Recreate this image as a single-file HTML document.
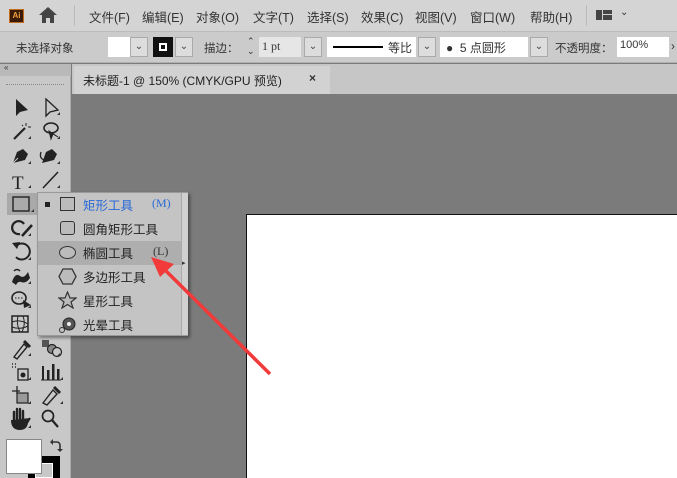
<!DOCTYPE html><html><head><meta charset="utf-8"><style>
*{margin:0;padding:0;box-sizing:border-box}
body{width:677px;height:478px;overflow:hidden;background:#7b7b7b;font-family:"Liberation Sans","Noto Sans CJK SC",sans-serif;font-size:12px;color:#333;position:relative}
.a{position:absolute}
.menu span{position:absolute;top:7px;font-size:12.5px;color:#333}
.box{position:absolute;background:#fff;border:1px solid #aaa;height:20px;top:37px}
.dd{position:absolute;top:37px;width:18px;height:20px;border:1px solid #aaa;background:#ddd;font-size:10px;text-align:center;line-height:18px;color:#444}
.it{position:absolute;left:0;width:143px;height:24px}
.it .t{position:absolute;left:45px;top:2px;font-size:12.5px;color:#222}
.ic{position:absolute;width:20px;height:20px}
</style></head><body>
<div class="a" style="left:0;top:0;width:677px;height:31px;background:#d4d4d4"></div>
<div class="a" style="left:9px;top:9px;width:15px;height:14px;background:#3a1b08;border:1px solid #c46b1a;color:#f0a040;font-size:8px;font-weight:bold;text-align:center;line-height:12px">Ai</div>
<svg class="a" style="left:38px;top:6px" width="20" height="18"><path d="M10 1 L1 9 H4 V17 H8 V12 H12 V17 H16 V9 H19 Z" fill="#444"/></svg>
<div class="a" style="left:74px;top:5px;width:1px;height:21px;background:#bbb"></div>
<div class="menu">
<span style="left:89px">文件(F)</span><span style="left:142px">编辑(E)</span><span style="left:196px">对象(O)</span><span style="left:253px">文字(T)</span><span style="left:307px">选择(S)</span><span style="left:361px">效果(C)</span><span style="left:415px">视图(V)</span><span style="left:470px">窗口(W)</span><span style="left:530px">帮助(H)</span></div>
<div class="a" style="left:586px;top:5px;width:1px;height:21px;background:#bbb"></div>
<div class="a" style="left:596px;top:10px;width:6px;height:10px;background:#444"></div>
<div class="a" style="left:603px;top:10px;width:9px;height:4px;background:#444"></div>
<div class="a" style="left:603px;top:15px;width:9px;height:5px;background:#444"></div>
<div class="a" style="left:620px;top:7px;font-size:10px">⌄</div>
<div class="a" style="left:0;top:31px;width:677px;height:32px;background:#cbcbcb;border-top:1px solid #bbb;border-bottom:1px solid #b0b0b0"></div>
<div class="a" style="left:16px;top:40px;font-size:11.5px">未选择对象</div>
<div class="box" style="left:108px;width:22px;border:none"></div><div class="dd" style="left:130px">⌄</div>
<div class="a" style="left:153px;top:37px;width:20px;height:20px;background:#111"><div class="a" style="left:6px;top:6px;width:8px;height:8px;border:2px solid #fff"></div></div><div class="dd" style="left:175px">⌄</div>
<div class="a" style="left:204px;top:40px;font-size:11.5px">描边：</div>
<div class="a" style="left:247px;top:36px;font-size:9px;line-height:10px">⌃<br>⌄</div>
<div class="box" style="left:259px;width:42px;border:none;background:#e6e6e6;font-family:'Liberation Serif',serif;padding:2px 3px">1 pt</div><div class="dd" style="left:304px">⌄</div>
<div class="box" style="left:327px;width:89px;border:none"><div class="a" style="left:6px;top:9px;width:50px;height:2px;background:#000"></div><span class="a" style="left:61px;top:2px">等比</span></div><div class="dd" style="left:418px">⌄</div>
<div class="box" style="left:440px;width:88px;border:none"><span class="a" style="left:6px;top:2px">●&nbsp; 5 点圆形</span></div><div class="dd" style="left:530px">⌄</div>
<div class="a" style="left:555px;top:40px;font-size:11.5px">不透明度：</div>
<div class="box" style="left:617px;width:52px;border:none;padding:2px 3px;font-size:11px">100%</div>
<div class="a" style="left:671px;top:39px;font-size:12px">›</div>
<div class="a" style="left:0;top:64px;width:71px;height:414px;background:#c8c8c8;border-right:1px solid #aaa"></div>
<div class="a" style="left:0;top:64px;width:71px;height:12px;background:#b9b9b9"></div>
<div class="a" style="left:4px;top:63px;font-size:8px">«</div>
<div class="a" style="left:6px;top:84px;width:58px;height:2px;border-top:1px dotted #888"></div>
<!-- selected rect tool bg -->
<div class="a" style="left:7px;top:193px;width:30px;height:22px;background:#a9a9a9"></div>
<!-- tools: left col center x=21, right col x=50 -->
<svg class="a" style="left:0;top:0" width="71" height="478" fill="#222" stroke="#222">
<!-- row0 y107 -->
<path d="M16 99 L16 116 L20 112 L28 110 Z" stroke="none"/>
<path d="M46 99 L46 116 L50 112 L58 110 Z" fill="none" stroke-width="1.3"/>
<!-- row1 y131 -->
<path d="M14 139 L25 128" stroke-width="2.2"/><path d="M26 123 v3 M28 127 h3 M22 125 l1 1" stroke-width="1"/>
<ellipse cx="51" cy="128" rx="7" ry="5" fill="none" stroke-width="1.6"/><path d="M49 131 L51 139 L53 134 L58 137 Z" stroke-width="1"/>
<!-- row2 y156 -->
<path d="M13 163 L17 152 L23 149 L28 154 L25 160 Z" stroke="none"/><path d="M13 163 L18 158" stroke="#c8c8c8"/>
<path d="M42 163 L46 152 L52 149 L57 154 L54 160 Z" stroke="none"/><path d="M41 152 q-2 6 3 8" fill="none" stroke-width="1.3"/>
<!-- row3 y180 -->
<text x="12" y="189" font-size="19" stroke="none" font-family="Liberation Serif">T</text>
<path d="M43 188 L58 172" stroke-width="1.5"/>
<!-- row4 y204 rect -->
<rect x="13" y="197" width="16" height="14" fill="#aaa" stroke-width="1.4"/>
<!-- row5 y228 shaper -->
<path d="M20 234 a6.5 6.5 0 1 1 4 -10" fill="none" stroke-width="2.2"/><path d="M22 236 L32 225" stroke-width="2.5"/>
<!-- row6 y252 rotate -->
<path d="M16 246 a8 8 0 1 1 0 11" fill="none" stroke-width="2"/><path d="M12 243 L17 249 L20 242 Z" stroke="none"/>
<!-- row7 y276 warp -->
<path d="M12 282 q3 -10 8 -6 q4 3 8 -4 l2 6 q-4 6 -9 4 q-3 -1 -5 3 Z" stroke="none"/><path d="M14 271 q3 -3 6 0" fill="none" stroke-width="1.5"/>
<!-- row8 y300 shape builder -->
<ellipse cx="19" cy="298" rx="7" ry="6" fill="none" stroke-width="1.6"/><path d="M15 298 h8" stroke-dasharray="1.5 1.5"/><path d="M23 300 L31 305 L24 308 Z" stroke="none"/>
<!-- row9 y324 mesh -->
<rect x="12" y="316" width="16" height="16" fill="none" stroke-width="1.5"/><path d="M12 322 q8 -3 16 2 M12 327 q8 3 16 -1 M18 316 q-2 8 2 16 M23 316 q3 8 -1 16" fill="none" stroke-width="1"/>
<!-- row10 y348 eyedropper / blend -->
<path d="M14 357 L24 344 L27 347 L17 359 Z" fill="none" stroke-width="1.4"/><path d="M24 341 L30 347" stroke-width="3"/>
<rect x="42" y="340" width="7" height="7" fill="#555" stroke="none"/><circle cx="52" cy="349" r="4.5" fill="#888" stroke-width="1.2"/><circle cx="57" cy="352" r="4.5" fill="#c8c8c8" stroke-width="1.2"/>
<!-- row11 y372 symbol / graph -->
<rect x="18" y="369" width="10" height="11" fill="none" stroke-width="1.3"/><circle cx="23" cy="375" r="2.5" stroke="none"/><path d="M12 364 h1 M15 364 h1 M12 367 h1 M15 367 h1" stroke-width="1.5"/>
<rect x="42" y="366" width="2" height="14" stroke="none"/><rect x="47" y="370" width="2.5" height="10" stroke="none"/><rect x="52" y="364" width="2.5" height="16" stroke="none"/><rect x="57" y="369" width="2.5" height="11" stroke="none"/><path d="M41 380 h20" stroke-width="1"/>
<!-- row12 y396 artboard / slice -->
<path d="M17 386 v8 M12 391 h8" stroke-width="1.3"/><rect x="17" y="393" width="11" height="10" fill="#999" stroke-width="1.2"/>
<path d="M43 403 L53 390 L57 394 L47 405 Z" fill="none" stroke-width="1.4"/><path d="M54 387 L60 393" stroke-width="3"/>
<!-- row13 y420 hand / zoom -->
<path d="M14 420 L14 412 M17 419 L17 409 M20 419 L20 409 M23 420 L23 411" stroke-width="2.4" stroke-linecap="round"/><path d="M12 420 q0 9 8 9 q6 0 7 -6 l3 -5" fill="#222" stroke-width="2"/>
<circle cx="48" cy="416" r="5.5" fill="none" stroke-width="1.7"/><path d="M52 420 L58 427" stroke-width="2.2"/>
<!-- small corner triangles -->
<g stroke="none" fill="#333">
<path d="M60 115 h-3 l3 -3z M31 139 h-3 l3-3z M60 139 h-3 l3-3z M31 164 h-3 l3-3z M60 164 h-3 l3-3z M31 188 h-3 l3-3z M60 188 h-3 l3-3z M34 212 h-3 l3-3z M31 236 h-3 l3-3z M31 260 h-3 l3-3z M31 284 h-3 l3-3z M31 308 h-3 l3-3z M31 356 h-3 l3-3z M60 356 h-3 l3-3z M31 380 h-3 l3-3z M63 380 h-3 l3-3z M31 404 h-3 l3-3z M63 404 h-3 l3-3z M31 428 h-3 l3-3z"/>
</g>
</svg>
<div class="a" style="left:28px;top:456px;width:32px;height:22px;background:#000"></div>
<div class="a" style="left:35px;top:463px;width:18px;height:15px;background:#c8c8c8;border:1px solid #fff"></div>
<div class="a" style="left:6px;top:439px;width:36px;height:35px;background:#fff;border:1px solid #888"></div>
<svg class="a" style="left:49px;top:439px" width="14" height="14"><path d="M3 3 h5 a3 3 0 0 1 3 3 v5" fill="none" stroke="#333" stroke-width="1.6"/><path d="M1 3 l3-3 v6z M11 13 l-3-3 h6z" fill="#333"/></svg>
<!-- tab row -->
<div class="a" style="left:72px;top:64px;width:605px;height:30px;background:#c6c6c6"></div>
<div class="a" style="left:74px;top:66px;width:256px;height:28px;background:#d2d2d2"></div>
<div class="a" style="left:83px;top:72px;font-size:12px;color:#222">未标题-1 @ 150% (CMYK/GPU 预览)</div>
<div class="a" style="left:309px;top:71px;font-size:12px;font-weight:bold;color:#333">×</div>
<div class="a" style="left:246px;top:214px;width:431px;height:264px;background:#fff;border-left:1px solid #111;border-top:1px solid #111"></div>
<!-- popup -->
<div class="a" style="left:37px;top:192px;width:151px;height:144px;background:#c4c4c4;border:1px solid #999;box-shadow:2px 2px 3px rgba(0,0,0,.4)">
<div class="a" style="left:143px;top:0;width:7px;height:142px;background:#d0d0d0;border-left:1px solid #aaa"></div>
<div class="a" style="left:144px;top:66px;font-size:7px">▸</div>
<div class="it" style="top:0"><div class="a" style="left:7px;top:9px;width:5px;height:5px;background:#222"></div><div class="a" style="left:22px;top:4px;width:15px;height:14px;border:1.3px solid #333;background:#bbb"></div><span class="t" style="color:#2a6ad8">矩形工具</span><span class="a" style="left:114px;top:3px;color:#2a6ad8;font-family:'Liberation Serif',serif">(M)</span></div>
<div class="it" style="top:24px"><div class="a" style="left:22px;top:4px;width:15px;height:14px;border:1.3px solid #333;border-radius:3px;background:#bbb"></div><span class="t">圆角矩形工具</span></div>
<div class="it" style="top:48px;background:#aeaeae"><div class="a" style="left:21px;top:5px;width:17px;height:13px;border:1.3px solid #333;border-radius:50%;background:#bbb"></div><span class="t">椭圆工具</span><span class="a" style="left:115px;top:3px;font-family:'Liberation Serif',serif">(L)</span></div>
<div class="it" style="top:72px"><svg class="a" style="left:20px;top:3px" width="19" height="17"><path d="M5 1 H14 L18 8.5 L14 16 H5 L1 8.5 Z" fill="#bbb" stroke="#333" stroke-width="1.3"/></svg><span class="t">多边形工具</span></div>
<div class="it" style="top:96px"><svg class="a" style="left:20px;top:2px" width="19" height="18"><path d="M9.5 1 L12 7 L18 7 L13 11 L15 17 L9.5 13.5 L4 17 L6 11 L1 7 L7 7 Z" fill="#bbb" stroke="#333" stroke-width="1.2"/></svg><span class="t">星形工具</span></div>
<div class="it" style="top:120px"><svg class="a" style="left:20px;top:2px" width="19" height="19"><circle cx="11" cy="9" r="6" fill="#555" stroke="#222"/><circle cx="11" cy="9" r="2" fill="#eee"/><circle cx="4" cy="15" r="2.5" fill="none" stroke="#333"/></svg><span class="t">光晕工具</span></div>
</div>
<svg class="a" style="left:0;top:0" width="677" height="478"><path d="M270 374 L163 268" stroke="#f23a3a" stroke-width="3.5"/><path d="M151 257 L174 264 L160 277 Z" fill="#f23a3a"/></svg>
</body></html>
